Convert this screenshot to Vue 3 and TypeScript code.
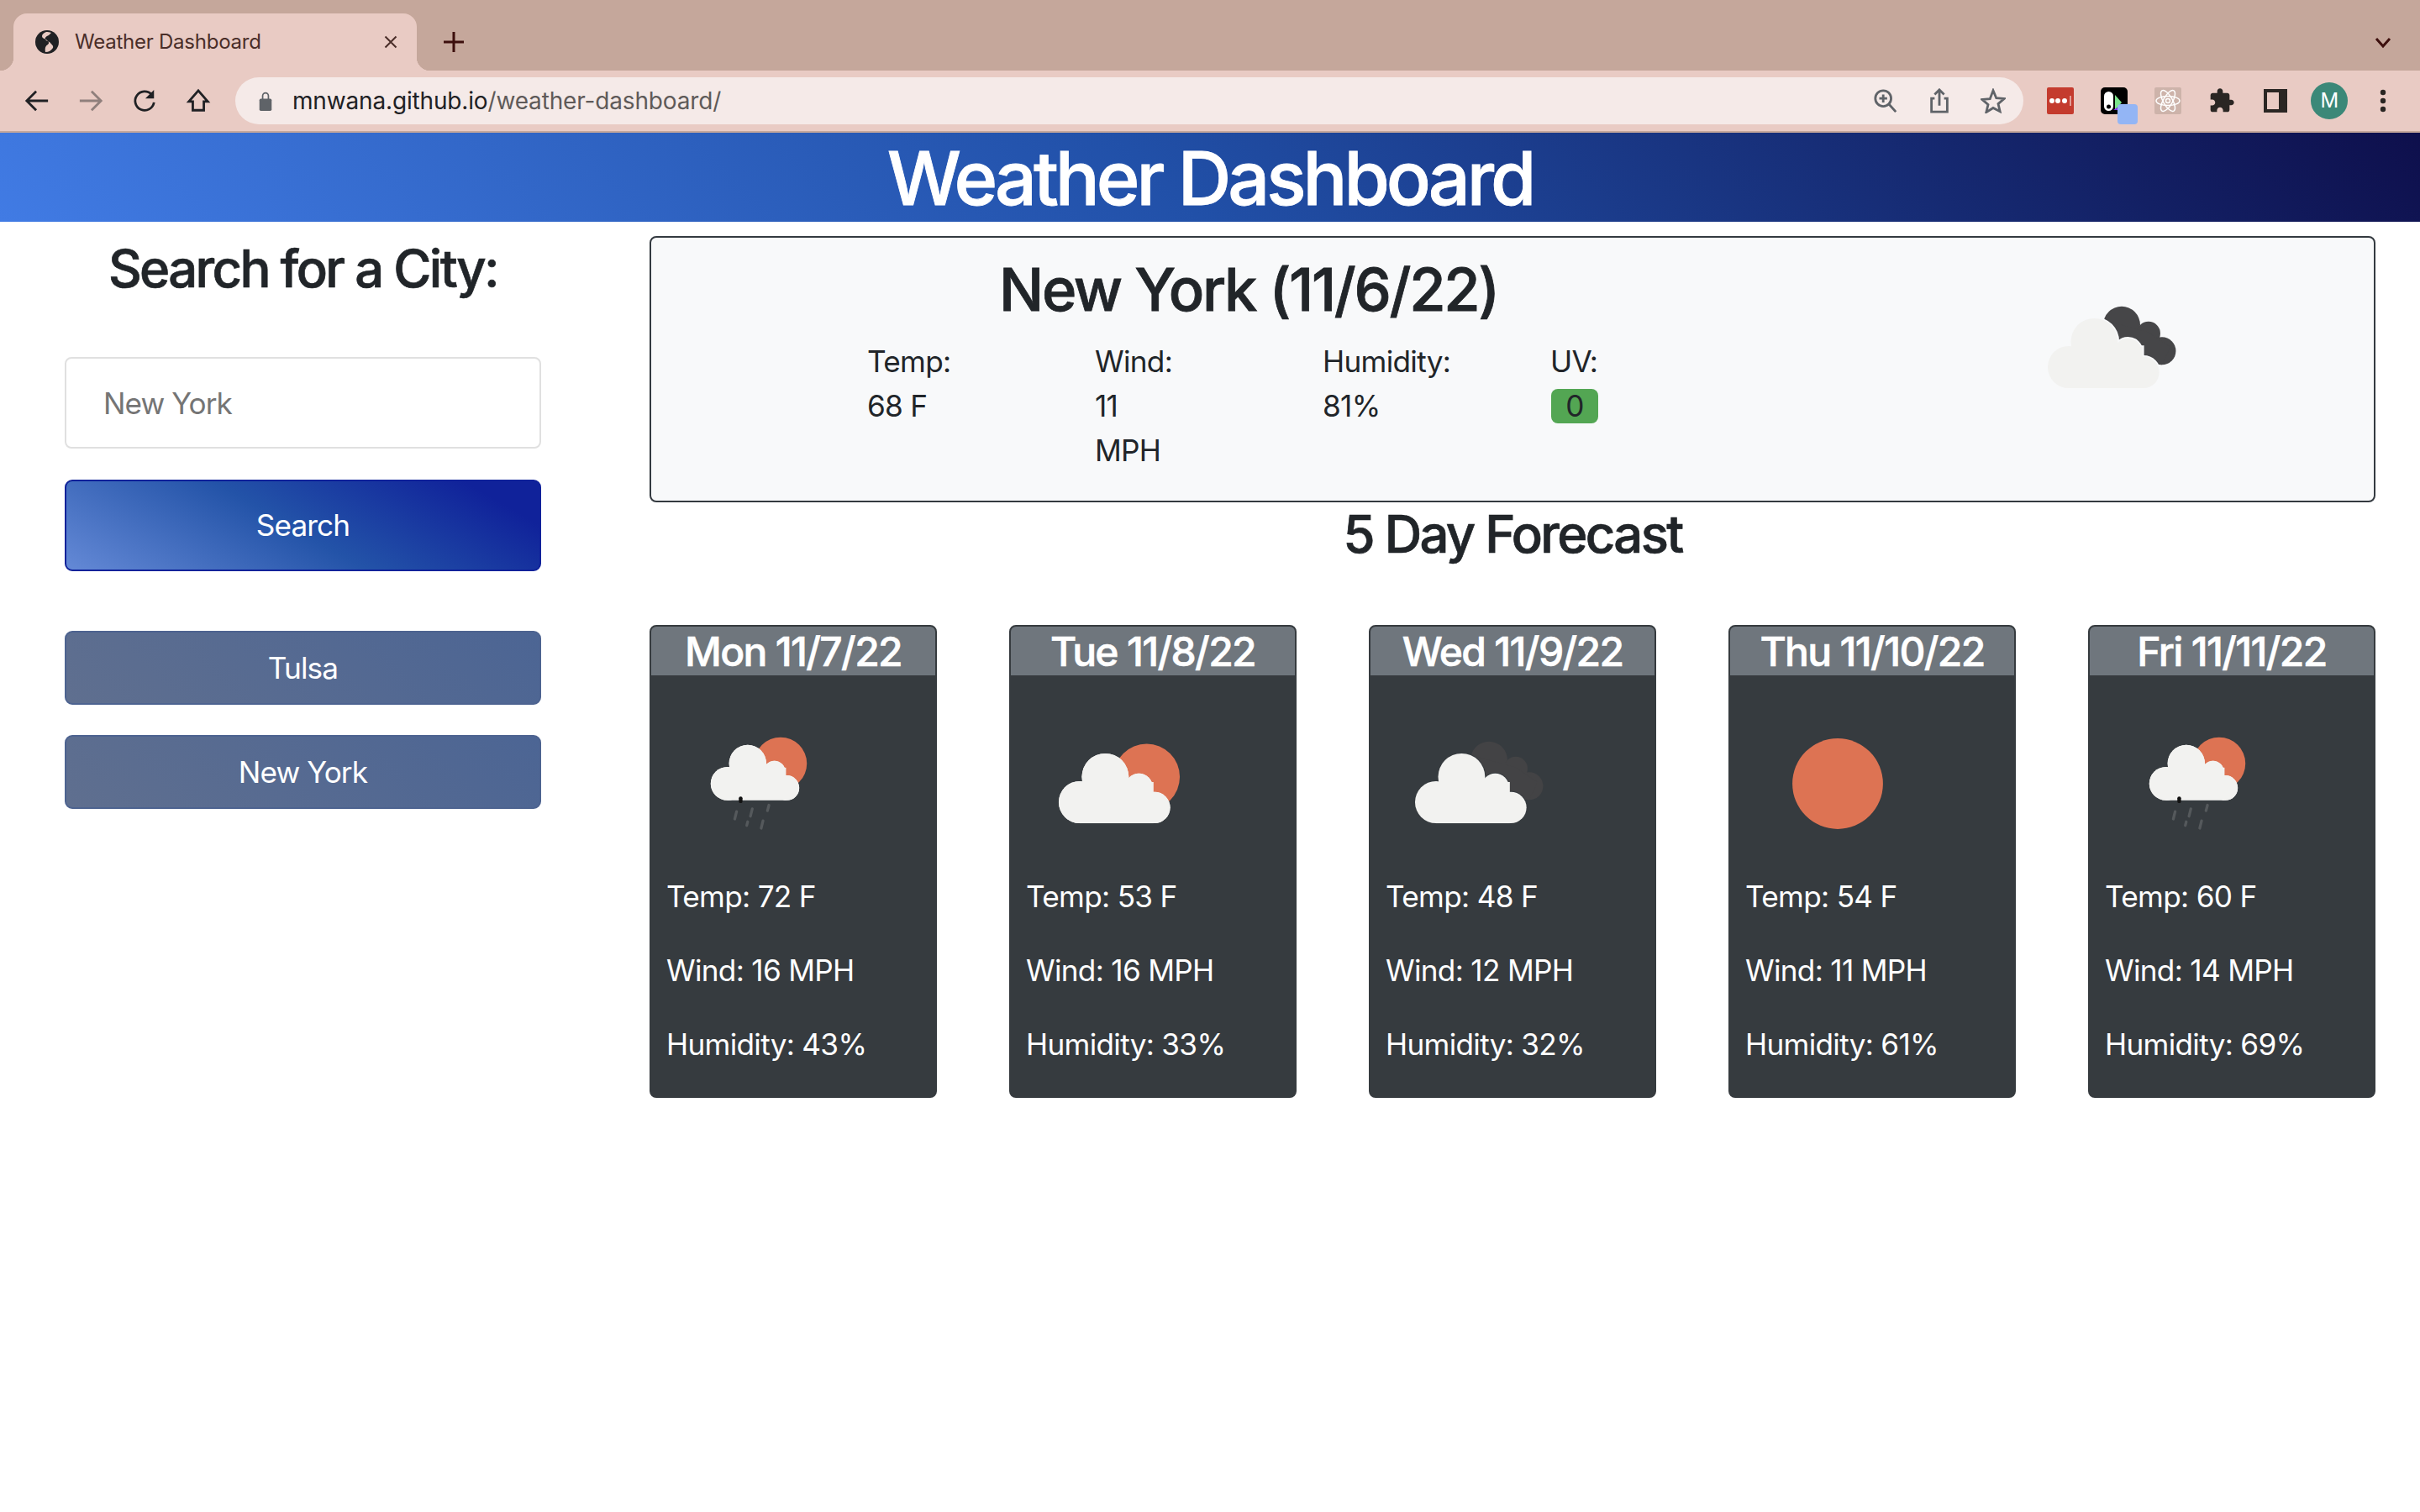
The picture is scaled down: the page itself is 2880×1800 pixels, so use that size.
<template>
  <div class="window">
    <div class="tabstrip">
      <div class="tab">
        <svg class="globe" viewBox="0 0 28 28">
          <circle cx="14" cy="14" r="14" fill="#202124" />
          <path d="M13 2c-3 1-5 3-5 5 0 3 4 3 6 5s3 3 1 5c-2 1-4 3-3 9 4 0 7-2 9-5 1-3-2-4-3-6-2-2-5-2-6-4s1-4 4-5l3-3c-2-1-4-1-6-1z" fill="#e9cbc4" />
        </svg>
        <span class="tab-title">Weather Dashboard</span>
        <svg class="tab-close" viewBox="0 0 16 16"><path d="M1.500 1.500l13 13M14.500 1.500l-13 13" stroke="#4a2e29" stroke-width="2" /></svg>
      </div>
      <svg class="new-tab" viewBox="0 0 26 26"><path d="M13 1v24M1 13h24" stroke="#3d0f0d" stroke-width="3" /></svg>
      <svg class="tab-menu" viewBox="0 0 20 14"><path d="M2 2l8 9 8-9" fill="none" stroke="#3d0f0d" stroke-width="3" /></svg>
    </div>

    <div class="toolbar">
      <div class="tool">
        <svg viewBox="0 0 32 32"><path d="M30 16H4M15 4L3 16l12 12" fill="none" stroke="#202124" stroke-width="3" /></svg>
      </div>
      <div class="tool">
        <svg viewBox="0 0 32 32"><path d="M2 16h26M17 4l12 12-12 12" fill="none" stroke="#8f7f7c" stroke-width="3" /></svg>
      </div>
      <div class="tool">
        <svg viewBox="0 0 32 32">
          <path d="M25 8a12 12 0 1 0 3 10" fill="none" stroke="#202124" stroke-width="3" />
          <path d="M28 2v11H17z" fill="#202124" />
        </svg>
      </div>
      <div class="tool">
        <svg viewBox="0 0 32 32"><path d="M16 3L4 17h5v11h14V17h5z" fill="none" stroke="#202124" stroke-width="3" /></svg>
      </div>
      <div class="urlbar">
        <svg class="lock" viewBox="0 0 18 28">
          <path d="M5 12V7a4 4 0 0 1 8 0v5" fill="none" stroke="#5f6368" stroke-width="2" />
          <rect x="0.5" y="11" width="17" height="17" rx="2" fill="#5f6368" />
        </svg>
        <span class="url"><span class="host">mnwana.github.io</span>/weather-dashboard/</span>
        <div class="url-actions">
          <div class="tool">
            <svg viewBox="0 0 32 32">
              <circle cx="13" cy="13" r="10" fill="none" stroke="#5f6368" stroke-width="3" />
              <path d="M13 8v10M8 13h10M20 20l9 10" fill="none" stroke="#5f6368" stroke-width="3" />
            </svg>
          </div>
          <div class="tool">
            <svg viewBox="0 0 32 32">
              <path d="M10 13H6v17h20V13h-4M16 22V3M10 8l6-6 6 6" fill="none" stroke="#5f6368" stroke-width="3" />
            </svg>
          </div>
          <div class="tool">
            <svg viewBox="0 0 32 32"><path d="M16 3l4 9.500 10 .8-7.600 6.500 2.300 9.700L16 25l-8.700 5.500 2.300-9.700L2 14.300l10-.8z" fill="none" stroke="#5f6368" stroke-width="3" /></svg>
          </div>
        </div>
      </div>
      <div class="tool">
        <svg class="ext" viewBox="0 0 32 32">
          <rect width="32" height="32" rx="2" fill="#c43b2e" />
          <circle cx="6" cy="16" r="3" fill="#fff" />
          <circle cx="13" cy="16" r="3" fill="#fff" />
          <circle cx="21" cy="16" r="3" fill="#fff" />
          <path d="M28 10v12" stroke="#fff" stroke-width="1" />
        </svg>
      </div>
      <div class="tool">
        <div class="ext-wrap">
          <svg class="ext" viewBox="0 0 32 32">
            <rect width="32" height="32" rx="5" fill="#000" />
            <rect x="4" y="5" width="11" height="23" rx="5.500" fill="#fff" />
            <circle cx="9.500" cy="23" r="2.500" fill="#000" />
            <path d="M17 9l8 9-8 9z" fill="#7be58c" />
            <path d="M15 27l5-3v3z" fill="#8b2cf0" />
          </svg>
          <span class="ext-badge"></span>
        </div>
      </div>
      <div class="tool">
        <svg class="ext" viewBox="0 0 32 32">
          <rect width="32" height="32" rx="2" fill="#cdb3aa" />
          <g fill="none" stroke="#fff" stroke-width="1.500">
            <ellipse cx="16" cy="16" rx="14" ry="5.500" />
            <ellipse cx="16" cy="16" rx="14" ry="5.500" transform="rotate(60 16 16)" />
            <ellipse cx="16" cy="16" rx="14" ry="5.500" transform="rotate(120 16 16)" />
            <circle cx="16" cy="16" r="2.500" />
          </g>
        </svg>
      </div>
      <div class="tool">
        <svg class="ext" viewBox="0 0 24 24">
          <path d="M20.500 11H19V7c0-1.100-.9-2-2-2h-4V3.500C13 2.120 11.880 1 10.500 1S8 2.120 8 3.500V5H4c-1.100 0-1.990.9-1.990 2v3.800H3.500c1.490 0 2.700 1.210 2.700 2.700s-1.210 2.700-2.700 2.700H2V20c0 1.100.9 2 2 2h3.800v-1.500c0-1.490 1.210-2.700 2.700-2.700 1.490 0 2.700 1.210 2.700 2.700V22H17c1.100 0 2-.9 2-2v-4h1.500c1.380 0 2.500-1.120 2.500-2.500S21.880 11 20.500 11z" fill="#2a2623" />
        </svg>
      </div>
      <div class="tool">
        <div class="side-panel"></div>
      </div>
      <div class="tool">
        <div class="avatar">M</div>
      </div>
      <div class="tool">
        <svg class="dots" viewBox="0 0 8 28">
          <circle cx="4" cy="4" r="3.200" fill="#2a2623" />
          <circle cx="4" cy="14" r="3.200" fill="#2a2623" />
          <circle cx="4" cy="24" r="3.200" fill="#2a2623" />
        </svg>
      </div>
    </div>

    <header class="page-header">Weather Dashboard</header>

    <div class="page">
      <aside class="sidebar">
        <h3 class="search-title">Search for a City:</h3>
        <input class="city-input" type="text" placeholder="New York" />
        <button class="btn btn-search" type="button">Search</button>
        <div class="history">
          <button v-for="city in history" :key="city" class="btn btn-city" type="button">{{ city }}</button>
        </div>
      </aside>

      <main class="content">
        <section class="current">
          <div class="current-info">
            <h2 class="current-title">New York (11/6/22)</h2>
            <div class="stats">
              <div><div>Temp:</div><div>68 F</div></div>
              <div><div>Wind:</div><div>11 MPH</div></div>
              <div><div>Humidity:</div><div>81%</div></div>
              <div><div>UV:</div><div><span class="uv">0</span></div></div>
            </div>
          </div>
          <svg class="weather-icon current-icon" viewBox="0 0 100 100">
            <g transform="translate(-1.800 0)">
              <g fill="#464648">
                <circle v-for="(c, i) in darkCloud" :key="i" :cx="c.cx" :cy="c.cy" :r="c.r" />
                <polygon points="50,36 72,42 84,50 79.500,59.700 60,58" />
              </g>
              <g fill="#f8f9fa" stroke="#f8f9fa" stroke-width="1.600">
                <circle v-for="(c, i) in cloud" :key="i" :cx="c.cx" :cy="c.cy" :r="c.r" />
                <rect x="29" y="50" width="40" height="22.300" />
              </g>
              <g fill="#f2f2f0">
                <circle v-for="(c, i) in cloud" :key="i" :cx="c.cx" :cy="c.cy" :r="c.r" />
                <rect x="29" y="50" width="40" height="22.300" />
              </g>
            </g>
          </svg>
        </section>

        <h3 class="forecast-title">5 Day Forecast</h3>

        <div class="forecast">
          <article v-for="day in days" :key="day.date" class="day">
            <h4 class="day-title">{{ day.date }}</h4>
            <div class="day-body">
              <svg class="weather-icon" viewBox="0 0 100 100">
                <circle v-if="day.icon === 'sun'" cx="50" cy="50.900" r="24.500" fill="#dd7353" />
                <g v-else :transform="day.icon === 'rain' ? 'translate(9.950 2.500) scale(.794)' : day.icon === 'dark' ? 'translate(-1.800 0)' : ''">
                  <circle v-if="day.icon !== 'dark'" cx="65.300" cy="47.200" r="17.900" fill="#dd7353" />
                  <g v-else fill="#434345">
                    <circle v-for="(c, i) in darkCloud" :key="i" :cx="c.cx" :cy="c.cy" :r="c.r" />
                    <polygon points="50,36 72,42 84,50 79.500,59.700 60,58" />
                  </g>
                  <g fill="#f2f2f0" stroke="#363b3f" :stroke-width="day.icon === 'dark' ? 0.8 : 0">
                    <circle v-for="(c, i) in cloud" :key="i" :cx="c.cx" :cy="c.cy" :r="c.r" />
                  </g>
                  <g fill="#f2f2f0">
                    <circle v-for="(c, i) in cloud" :key="i" :cx="c.cx" :cy="c.cy" :r="c.r" />
                    <rect x="29" y="50" width="40" height="22.300" />
                  </g>
                </g>
                <g v-if="day.icon === 'rain'" stroke="#55595c" stroke-width="1.500" stroke-linecap="round">
                  <path d="M38 66l-1 4M46.500 64.500l-1 4M55.500 62.500l-.8 3M44 71.500l-.5 2M52.300 71l-1 4" />
                  <path d="M40.200 58.800v1.600" stroke="#111" stroke-width="2" />
                </g>
              </svg>
              <p>Temp: {{ day.temp }} F</p>
              <p>Wind: {{ day.wind }} MPH</p>
              <p>Humidity: {{ day.humidity }}%</p>
            </div>
          </article>
        </div>
      </main>
    </div>
  </div>
</template>

<script setup lang="ts">
interface Day {
  date: string;
  icon: 'rain' | 'cloud' | 'dark' | 'sun';
  temp: number;
  wind: number;
  humidity: number;
}

const history = ['Tulsa', 'New York'];

// white cloud shared by the weather icons, 100 unit box
const cloud = [
  { cx: 29.1, cy: 60.9, r: 11.4 },
  { cx: 42.9, cy: 47.2, r: 12.7 },
  { cx: 61.1, cy: 52.7, r: 7.4 },
  { cx: 69.5, cy: 63.8, r: 8.5 },
];

const darkCloud = [
  { cx: 57.7, cy: 38.1, r: 10 },
  { cx: 72.2, cy: 42.7, r: 6.4 },
  { cx: 79.5, cy: 52.2, r: 7.5 },
];

const days: Day[] = [
  { date: 'Mon 11/7/22', icon: 'rain', temp: 72, wind: 16, humidity: 43 },
  { date: 'Tue 11/8/22', icon: 'cloud', temp: 53, wind: 16, humidity: 33 },
  { date: 'Wed 11/9/22', icon: 'dark', temp: 48, wind: 12, humidity: 32 },
  { date: 'Thu 11/10/22', icon: 'sun', temp: 54, wind: 11, humidity: 61 },
  { date: 'Fri 11/11/22', icon: 'rain', temp: 60, wind: 14, humidity: 69 },
];
</script>

<style>
html,
body {
  background: #fff;
}
</style>

<style scoped>
.window {
  min-height: 1800px;
  font-family: Inter, "Liberation Sans", sans-serif;
  font-size: 35.2px;
  line-height: 52.8px;
  letter-spacing: -0.02em;
  color: #212529;
  background: #fff;
}

.tabstrip {
  display: flex;
  align-items: flex-start;
  height: 84px;
  background: #c5a79b;
}

.tab {
  position: relative;
  display: flex;
  align-items: center;
  width: 480px;
  height: 68px;
  margin: 16px 0 0 16px;
  padding: 0 23px 0 26px;
  box-sizing: border-box;
  background: #e9cbc4;
  border-radius: 16px 16px 0 0;
}

.tab::before,
.tab::after {
  content: "";
  position: absolute;
  bottom: 0;
  width: 16px;
  height: 16px;
}

.tab::before {
  left: -16px;
  background: radial-gradient(circle at 0 0, transparent 16px, #e9cbc4 16.500px);
}

.tab::after {
  right: -16px;
  background: radial-gradient(circle at 100% 0, transparent 16px, #e9cbc4 16.500px);
}

.globe {
  width: 28px;
  height: 28px;
  margin-right: 19px;
  flex: none;
}

.tab-title {
  flex: 1;
  font-size: 24px;
  line-height: 34px;
  letter-spacing: -0.01em;
  color: #4a2e29;
}

.tab-close {
  width: 16px;
  height: 16px;
}

.new-tab {
  width: 26px;
  height: 26px;
  margin: 37px 0 0 31px;
}

.tab-menu {
  width: 20px;
  height: 14px;
  margin: 44px 34px 0 auto;
}

.toolbar {
  display: flex;
  align-items: center;
  height: 72px;
  padding: 0 12px;
  background: #e9cbc4;
  border-bottom: 2px solid #c5a79b;
}

.tool {
  display: flex;
  align-items: center;
  justify-content: center;
  width: 64px;
  height: 64px;
  flex: none;
}

.tool > svg {
  width: 30px;
  height: 30px;
}

.tool > .ext {
  width: 32px;
  height: 32px;
}

.tool > .dots {
  width: 8px;
  height: 28px;
}

.ext-wrap {
  position: relative;
  width: 32px;
  height: 32px;
}

.ext-wrap .ext {
  display: block;
  width: 32px;
  height: 32px;
}

.ext-badge {
  position: absolute;
  left: 20px;
  top: 20px;
  width: 24px;
  height: 24px;
  border-radius: 4px;
  background: #93b5f5;
}

.side-panel {
  width: 28px;
  height: 28px;
  box-sizing: border-box;
  border: 4px solid #2a2623;
  border-right-width: 10px;
  background: #e9cbc4;
}

.avatar {
  width: 44px;
  height: 44px;
  border-radius: 50%;
  background: #3b8878;
  color: #fff;
  font-size: 24px;
  line-height: 44px;
  text-align: center;
}

.urlbar {
  flex: 1;
  display: flex;
  align-items: center;
  height: 56px;
  margin: 0 12px;
  padding: 0 4px 0 28px;
  border-radius: 28px;
  background: #f5eae8;
}

.lock {
  width: 16px;
  height: 24px;
  margin-right: 24px;
}

.url {
  font-size: 28px;
  line-height: 40px;
  letter-spacing: -0.16px;
  color: #5f5a59;
}

.host {
  color: #202124;
}

.url-actions {
  display: flex;
  margin-left: auto;
}

.page-header {
  height: 106px;
  background: linear-gradient(45deg, #417be4 0%, #2150a8 48%, #0e0f4c 100%);
  color: #fff;
  font-size: 88px;
  font-weight: 550;
  line-height: 108px;
  letter-spacing: -0.046em;
  -webkit-text-stroke: 0.8px #fff;
  text-align: center;
}

.page {
  display: flex;
  align-items: flex-start;
  padding: 0 53px 0 77px;
}

.sidebar {
  display: flex;
  flex-direction: column;
  width: 567px;
  margin-right: 129px;
  padding-top: 19px;
  flex: none;
}

.search-title {
  margin: 0 0 68px;
  font-size: 61.6px;
  font-weight: 550;
  line-height: 74px;
  letter-spacing: -0.043em;
  -webkit-text-stroke: 0.7px #212529;
  text-align: center;
}

.city-input {
  height: 109px;
  margin-bottom: 37px;
  padding: 0 44px;
  box-sizing: border-box;
  border: 2px solid #e0e0e0;
  border-radius: 8px;
  font: inherit;
  letter-spacing: -0.027em;
  background: #fff;
}

.city-input::placeholder {
  color: #757575;
  opacity: 1;
}

.btn {
  display: block;
  width: 100%;
  border-radius: 9px;
  color: #fff;
  font: inherit;
  letter-spacing: -0.025em;
  text-align: center;
}

.btn-search {
  height: 109px;
  border: 2px solid #10229a;
  background: linear-gradient(30deg, #6489d6 0%, #2353a8 48%, #10229a 88%);
}

.history {
  display: flex;
  flex-direction: column;
  gap: 36px;
  margin-top: 71px;
}

.btn-city {
  height: 88px;
  border: 2px solid #4d6390;
  background: linear-gradient(45deg, #5f6f8f 0%, #4c6594 100%);
}

.content {
  flex: 1;
  min-width: 0;
  padding-top: 17px;
}

.current {
  display: flex;
  align-items: flex-start;
  height: 317px;
  padding: 20px 0 0;
  box-sizing: border-box;
  border: 2px solid #343a40;
  border-radius: 8px;
  background: #f8f9fa;
}

.current-info {
  width: 1422px;
  flex: none;
}

.current-title {
  margin: 0 0 17px;
  font-size: 70.4px;
  font-weight: 550;
  line-height: 84px;
  letter-spacing: -0.033em;
  -webkit-text-stroke: 0.8px #212529;
  text-align: center;
}

.stats {
  display: grid;
  grid-template-columns: repeat(4, 100px);
  column-gap: 171px;
  padding-left: 257px;
}

.uv {
  display: inline-block;
  width: 56px;
  height: 41px;
  margin: -2px 0 0 1px;
  border-radius: 8px;
  background: #53a653;
  line-height: 41px;
  text-align: center;
}

.weather-icon {
  display: block;
  width: 220px;
  height: 220px;
}

.current-icon {
  margin-left: 205px;
}

.forecast-title {
  margin: 0 0 71px;
  padding-top: 1px;
  font-size: 61.6px;
  font-weight: 550;
  line-height: 74px;
  letter-spacing: -0.043em;
  -webkit-text-stroke: 0.7px #212529;
  text-align: center;
}

.forecast {
  display: flex;
  justify-content: space-between;
}

.day {
  width: 342px;
  height: 563px;
  box-sizing: border-box;
  border: 2px solid #363b3f;
  border-radius: 8px;
  overflow: hidden;
  background: #363b3f;
  color: #fff;
}

.day-title {
  height: 58px;
  margin: 0;
  background: #6f767d;
  font-size: 48px;
  font-weight: 550;
  line-height: 60px;
  letter-spacing: -0.035em;
  -webkit-text-stroke: 0.6px #fff;
  text-align: center;
}

.day-body {
  padding: 17px 18px 0;
}

.day-body p {
  margin: 0 0 35.2px;
}
</style>
